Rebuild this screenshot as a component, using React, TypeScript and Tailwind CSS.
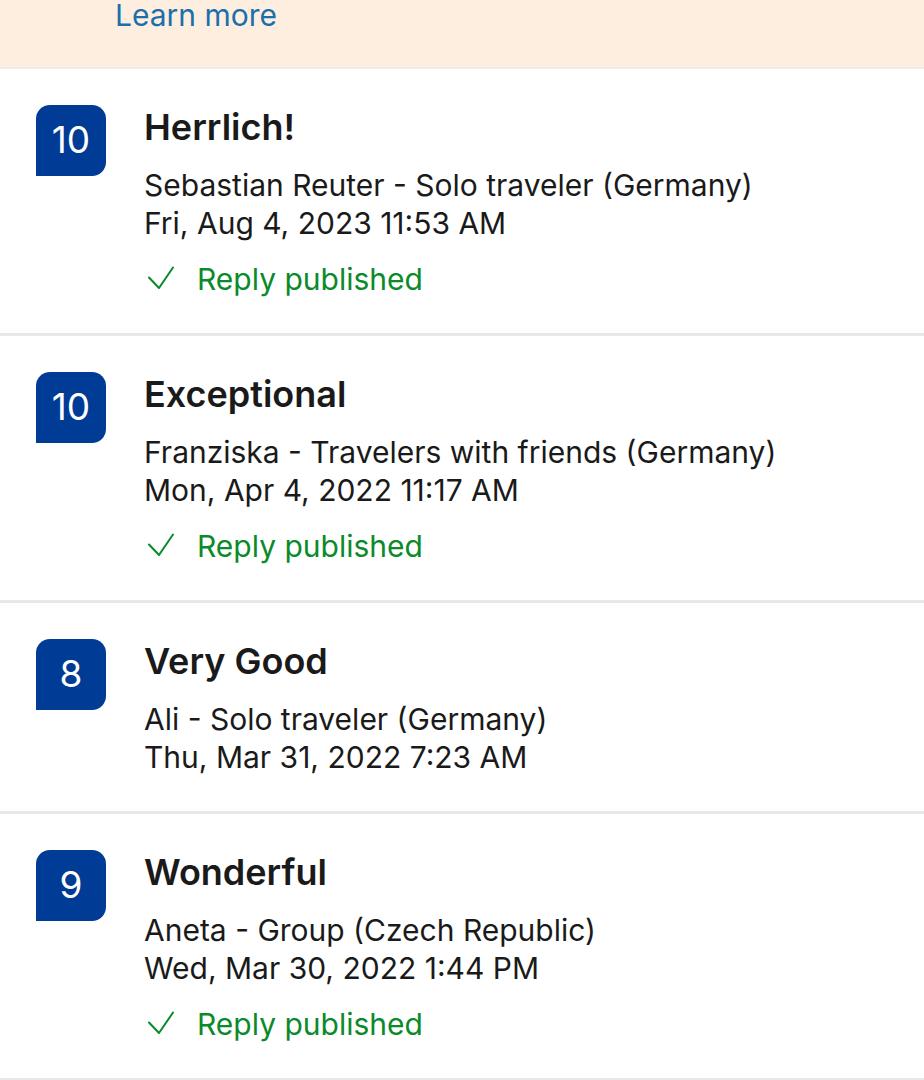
type Review = {
  score: number;
  title: string;
  author: string;
  date: string;
  replied: boolean;
};

const REVIEWS: Review[] = [
  {
    score: 10,
    title: "Herrlich!",
    author: "Sebastian Reuter - Solo traveler (Germany)",
    date: "Fri, Aug 4, 2023 11:53 AM",
    replied: true,
  },
  {
    score: 10,
    title: "Exceptional",
    author: "Franziska - Travelers with friends (Germany)",
    date: "Mon, Apr 4, 2022 11:17 AM",
    replied: true,
  },
  {
    score: 8,
    title: "Very Good",
    author: "Ali - Solo traveler (Germany)",
    date: "Thu, Mar 31, 2022 7:23 AM",
    replied: false,
  },
  {
    score: 9,
    title: "Wonderful",
    author: "Aneta - Group (Czech Republic)",
    date: "Wed, Mar 30, 2022 1:44 PM",
    replied: true,
  },
];

function CheckMark() {
  return (
    <svg width="26" height="24" viewBox="0 0 26 24" fill="none" className="shrink-0">
      <polyline
        points="1,11.5 11,22 25,1.5"
        stroke="currentColor"
        strokeWidth="2"
        strokeLinecap="round"
        strokeLinejoin="round"
      />
    </svg>
  );
}

function ReviewRow({ review }: { review: Review }) {
  return (
    <div className="flex gap-[38px] border-b-[3px] border-[#e8e8e8] pl-9 pt-9 pb-[35px]">
      <div className="flex h-[71px] w-[70px] shrink-0 items-center justify-center rounded-t-[14px] rounded-br-[14px] bg-[#003b95] pb-[2px] text-[37px] text-white">
        {review.score}
      </div>
      <div className="flex flex-col">
        <div className="text-[36px] font-semibold leading-[44px] text-[#1a1a1a]">
          {review.title}
        </div>
        <div className="mt-[17px] text-[30px] leading-[38px] text-[#1a1a1a]">
          <div>{review.author}</div>
          <div>{review.date}</div>
        </div>
        {review.replied && (
          <div className="mt-[18px] flex items-center gap-[27px] text-[30px] leading-[38px] text-[#0a8a2a]">
            <div className="pl-[4px] pb-[2px]">
              <CheckMark />
            </div>
            <span className="-ml-[4px]">Reply published</span>
          </div>
        )}
      </div>
    </div>
  );
}

export default function App() {
  return (
    <div
      className="min-h-screen w-[924px] bg-white"
      style={{ fontFamily: "Inter, 'Noto Sans', sans-serif" }}
    >
      <div className="h-[69px] border-b-[2px] border-[#ececec] bg-[#fdeee0] pl-[115px]">
        <a className="block text-[30px] leading-[30px] text-[#1b6fab]">Learn more</a>
      </div>
      {REVIEWS.map((r, i) => (
        <ReviewRow key={i} review={r} />
      ))}
    </div>
  );
}
